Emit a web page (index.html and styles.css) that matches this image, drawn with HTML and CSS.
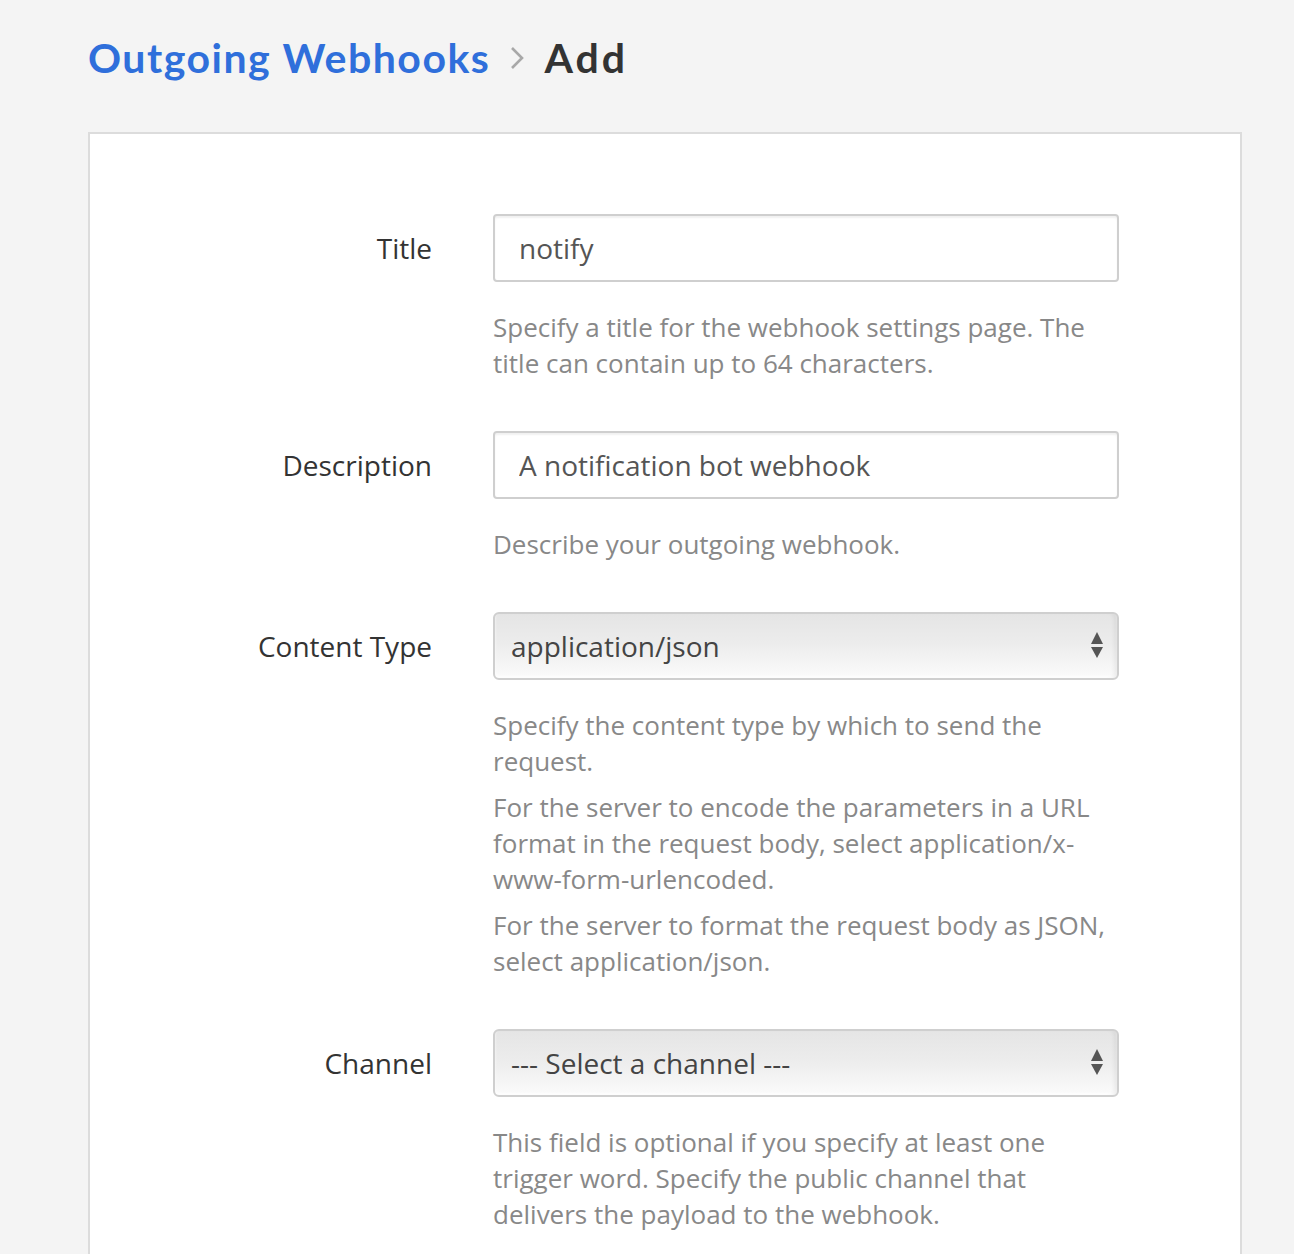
FILE: index.html
```html
<!DOCTYPE html>
<html lang="en">
<head>
<meta charset="utf-8">
<title>Outgoing Webhooks - Add</title>
<link rel="stylesheet" href="styles.css">
</head>
<body>
<header class="crumbs">
  <a class="crumb-link" href="#">Outgoing Webhooks</a>
  <svg class="crumb-sep" width="14" height="24" viewBox="0 0 14 24" aria-hidden="true"><polyline points="2,2 12,12 2,22" fill="none" stroke="#a8a8a8" stroke-width="2.6"/></svg>
  <span class="crumb-current">Add</span>
</header>
<main class="card">
  <div class="row">
    <label class="label" for="title">Title</label>
    <div class="field">
      <input class="input" id="title" type="text" value="notify">
      <div class="help"><p>Specify a title for the webhook settings page. The title can contain up to 64 characters.</p></div>
    </div>
  </div>
  <div class="row">
    <label class="label" for="desc">Description</label>
    <div class="field">
      <input class="input" id="desc" type="text" value="A notification bot webhook">
      <div class="help"><p>Describe your outgoing webhook.</p></div>
    </div>
  </div>
  <div class="row">
    <label class="label" for="ctype">Content Type</label>
    <div class="field">
      <div class="select-wrap">
        <select class="select" id="ctype"><option>application/json</option><option>application/x-www-form-urlencoded</option></select>
        <svg class="select-arrows" width="12" height="26" viewBox="0 0 12 26" aria-hidden="true"><polygon points="6,0 12,12 0,12" fill="#555"/><polygon points="0,15 12,15 6,26" fill="#555"/></svg>
      </div>
      <div class="help">
        <p>Specify the content type by which to send the request.</p>
        <p>For the server to encode the parameters in a URL format in the request body, select application/x-www-form-urlencoded.</p>
        <p>For the server to format the request body as JSON, select application/json.</p>
      </div>
    </div>
  </div>
  <div class="row">
    <label class="label" for="channel">Channel</label>
    <div class="field">
      <div class="select-wrap">
        <select class="select" id="channel"><option>--- Select a channel ---</option></select>
        <svg class="select-arrows" width="12" height="26" viewBox="0 0 12 26" aria-hidden="true"><polygon points="6,0 12,12 0,12" fill="#555"/><polygon points="0,15 12,15 6,26" fill="#555"/></svg>
      </div>
      <div class="help"><p>This field is optional if you specify at least one trigger word. Specify the public channel that delivers the payload to the webhook.</p></div>
    </div>
  </div>
</main>
</body>
</html>
```
FILE: styles.css
```css
html, body {
  margin: 0;
  padding: 0;
  background: #f4f4f4;
  font-family: "Open Sans", "Liberation Sans", sans-serif;
}

.crumbs {
  display: flex;
  align-items: center;
  padding: 33px 0 0 88px;
  height: 49px;
  font-family: Lato, "Open Sans", sans-serif;
  font-weight: 700;
  font-size: 41px;
  letter-spacing: 1.5px;
}

.crumb-link {
  color: #2f6fdb;
  text-decoration: none;
}

.crumb-sep {
  margin: 0 20px 0 20px;
}

.crumb-current {
  color: #333;
  letter-spacing: 3px;
}

.card {
  margin: 50px 52px 0 88px;
  background: #fff;
  border: 2px solid #dcdcdc;
  border-bottom: none;
  padding: 80px 0 40px 0;
  min-height: 1100px;
}

.row {
  display: grid;
  grid-template-columns: 342px 626px;
  column-gap: 61px;
  margin-bottom: 50px;
}

.label {
  text-align: right;
  font-size: 28px;
  line-height: 68px;
  color: #333;
}

.field {
  display: flex;
  flex-direction: column;
}

.input {
  box-sizing: border-box;
  width: 100%;
  height: 68px;
  margin: 0;
  border: 2px solid #cfcfcf;
  border-radius: 4px;
  padding: 0 24px;
  font-family: "Open Sans", sans-serif;
  font-size: 28px;
  color: #555;
  background: #fff;
  box-shadow: inset 0 2px 2px rgba(0, 0, 0, 0.06);
  outline: none;
}

.select-wrap {
  position: relative;
}

.select {
  box-sizing: border-box;
  width: 100%;
  height: 68px;
  margin: 0;
  -webkit-appearance: none;
  appearance: none;
  border: 2px solid #cfcfcf;
  border-radius: 6px;
  padding: 0 40px 0 16px;
  font-family: "Open Sans", sans-serif;
  font-size: 28px;
  color: #444;
  background: linear-gradient(to bottom, #e5e5e5 0%, #ececec 45%, #fbfbfb 100%);
  box-shadow: inset -5px 0 5px -3px rgba(0, 0, 0, 0.08), inset 0 -2px 3px rgba(255, 255, 255, 0.8);
  outline: none;
}

.select-arrows {
  position: absolute;
  right: 16px;
  top: 20px;
  pointer-events: none;
}

.help {
  margin-top: 27px;
  font-size: 26px;
  line-height: 36px;
  color: #888;
}

.help p {
  margin: 0 0 10px 0;
}

.help p:last-child {
  margin-bottom: 0;
}
```
